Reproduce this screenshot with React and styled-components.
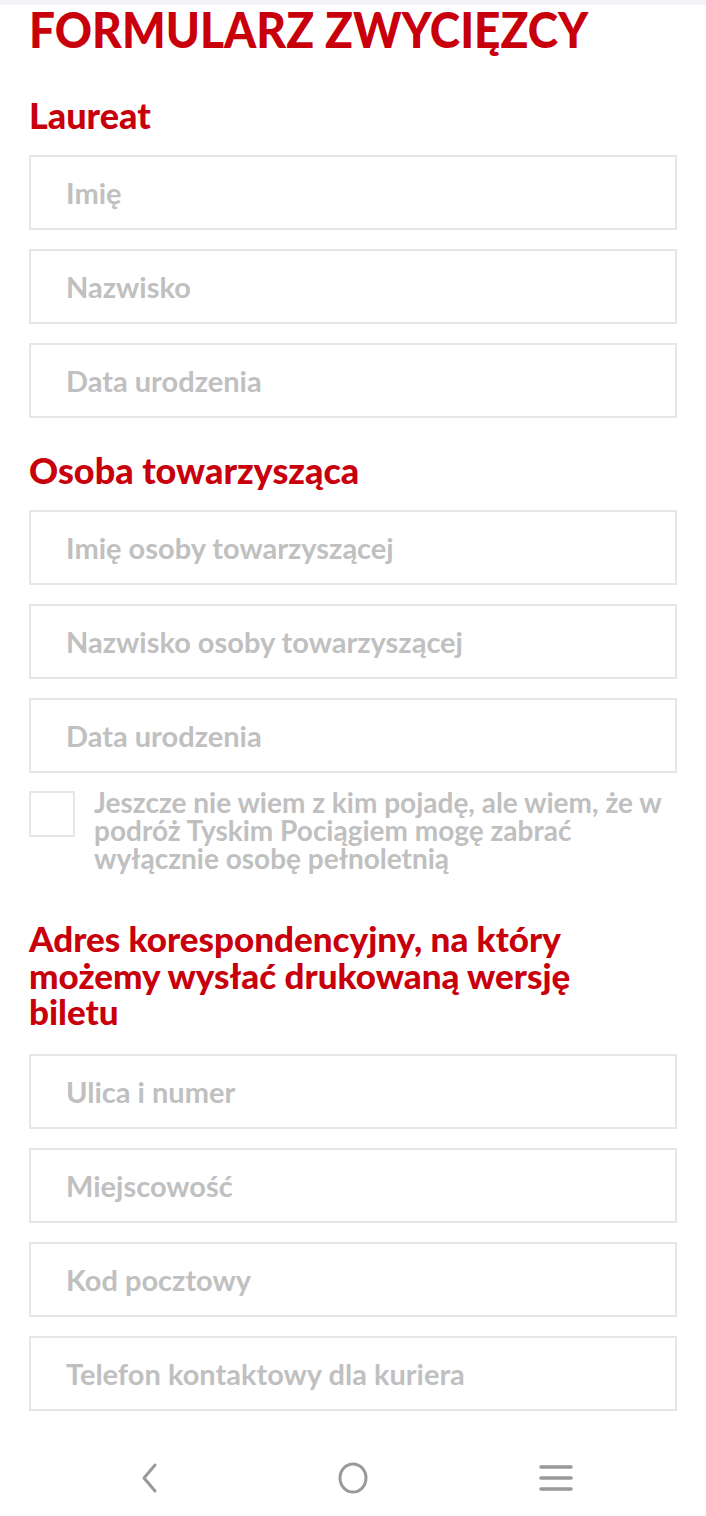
import React from 'react';
import styled, { createGlobalStyle } from 'styled-components';

const Global = createGlobalStyle`
    html, body { margin:0; padding:0; background:#fff; }
    body { font-family: Lato, "Noto Sans", sans-serif; }
`

const Page = styled.div`
    width:706px;
    height:1516px;
    display:flex;
    flex-direction:column;
    background:#fff;
    overflow:hidden;
`
const TopStrip = styled.div`
    height:5px;
    background:#f3f3f7;
`
const Form = styled.div`
    flex:1;
    padding:0 29px;
    display:flex;
    flex-direction:column;
`
const Title = styled.h1`
    margin:-1px 0 0 0;
    font-family:Lato, sans-serif;
    font-weight:900;
    font-size:50px;
    line-height:50px;
    white-space:nowrap;
    color:#c8000c;
    transform:scaleX(0.92);
    transform-origin:left center;
`
const SectionTitle = styled.h2`
    margin:${p => p.top} 0 ${p => p.bottom || '22px'} 0;
    max-width:${p => p.max || 'none'};
    font-family:Lato, sans-serif;
    font-weight:900;
    font-size:${p => p.size || '36px'};
    line-height:${p => p.lh || '36px'};
    color:#c8000c;
`
const Fields = styled.div`
    display:flex;
    flex-direction:column;
    gap:19px;
`
const Input = styled.input`
    box-sizing:border-box;
    width:648px;
    height:75px;
    border:2px solid #e6e6e6;
    padding:0 0 0 35px;
    font-family:Lato, sans-serif;
    font-weight:700;
    font-size:29px;
    outline:none;
    background:#fff;
    &::placeholder { color:#c0c0c0; }
`
const CheckRow = styled.label`
    display:flex;
    gap:19px;
    margin-top:18px;
    align-items:flex-start;
`
const Box = styled.span`
    flex:none;
    box-sizing:border-box;
    width:46px;
    height:46px;
    border:2px solid #e6e6e6;
`
const CheckText = styled.span`
    font-family:Lato, sans-serif;
    font-weight:700;
    font-size:28px;
    line-height:28px;
    color:#c0c0c0;
    margin-top:-3px;
`
const NavBar = styled.div`
    height:76px;
    display:flex;
    justify-content:center;
    align-items:center;
    gap:163px;
`
const NavBtn = styled.div`
    width:40px;
    height:40px;
    display:flex;
    align-items:center;
    justify-content:center;
`

export default function App() {
    return (
        <Page>
            <Global />
            <TopStrip />
            <Form>
                <Title>FORMULARZ ZWYCIĘZCY</Title>
                <SectionTitle top="43px">Laureat</SectionTitle>
                <Fields>
                    <Input placeholder="Imię" />
                    <Input placeholder="Nazwisko" />
                    <Input placeholder="Data urodzenia" />
                </Fields>
                <SectionTitle top="34px">Osoba towarzysząca</SectionTitle>
                <Fields>
                    <Input placeholder="Imię osoby towarzyszącej" />
                    <Input placeholder="Nazwisko osoby towarzyszącej" />
                    <Input placeholder="Data urodzenia" />
                </Fields>
                <CheckRow>
                    <Box />
                    <CheckText>Jeszcze nie wiem z kim pojadę, ale wiem, że w podróż Tyskim Pociągiem mogę zabrać wyłącznie osobę pełnoletnią</CheckText>
                </CheckRow>
                <SectionTitle top="48px" bottom="24px" size="35px" lh="36.5px" max="565px">Adres korespondencyjny, na który możemy wysłać drukowaną wersję biletu</SectionTitle>
                <Fields>
                    <Input placeholder="Ulica i numer" />
                    <Input placeholder="Miejscowość" />
                    <Input placeholder="Kod pocztowy" />
                    <Input placeholder="Telefon kontaktowy dla kuriera" />
                </Fields>
            </Form>
            <NavBar>
                <NavBtn>
                    <svg width="22" height="32" viewBox="0 0 22 32"><path d="M16 3 L5 16 L16 29" fill="none" stroke="#999" strokeWidth="3" strokeLinecap="round" strokeLinejoin="round" /></svg>
                </NavBtn>
                <NavBtn>
                    <svg width="32" height="34" viewBox="0 0 32 34"><ellipse cx="16" cy="17" rx="13" ry="14" fill="none" stroke="#999" strokeWidth="3" /></svg>
                </NavBtn>
                <NavBtn>
                    <svg width="34" height="30" viewBox="0 0 34 30"><path d="M2 4 H32 M2 15 H32 M2 26 H32" stroke="#999" strokeWidth="3.5" strokeLinecap="round" /></svg>
                </NavBtn>
            </NavBar>
        </Page>
    );
}
